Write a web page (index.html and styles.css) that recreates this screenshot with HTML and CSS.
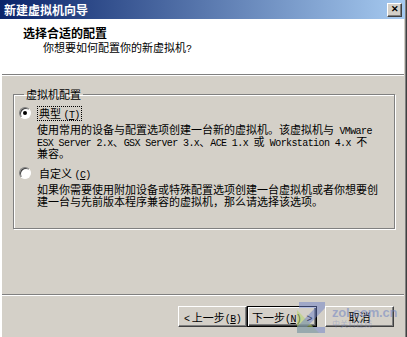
FILE: index.html
```html
<!DOCTYPE html>
<html lang="zh-CN">

<head>
    <meta charset="UTF-8">
    <title>新建虚拟机向导</title>
    <link rel="stylesheet" href="styles.css">
</head>

<body>
    <div class="window">
        <!-- 标题栏 -->
        <div class="titlebar">
            <span class="title">新建虚拟机向导</span>
            <button type="button" class="close-btn">✕</button>
        </div>

        <!-- 向导页头 -->
        <div class="header">
            <h1>选择合适的配置</h1>
            <p>你想要如何配置你的新虚拟机<span class="en">?</span></p>
        </div>
        <div class="etched"></div>

        <div class="content">
            <fieldset class="group">
                <legend>虚拟机配置</legend>

                <div class="option">
                    <span class="radio checked"></span>
                    <span class="option-label focus">典型 <span class="en">(<u>T</u>)</span></span>
                    <p class="option-desc">使用常用的设备与配置选项创建一台新的虚拟机。该虚拟机与<span class="en"> VMware</span><br><span class="en">ESX Server 2.x</span>、<span class="en">GSX Server 3.x</span>、<span class="en">ACE 1.x </span>或<span class="en"> Workstation 4.x </span>不<br>兼容。</p>
                </div>

                <div class="option">
                    <span class="radio"></span>
                    <span class="option-label">自定义 <span class="en">(<u>C</u>)</span></span>
                    <p class="option-desc">如果你需要使用附加设备或特殊配置选项创建一台虚拟机或者你想要创<br>建一台与先前版本程序兼容的虚拟机，那么请选择该选项。</p>
                </div>
            </fieldset>
        </div>

        <div class="etched"></div>
        <div class="footer">
            <button type="button" class="win-btn"><span class="en">&lt;</span> 上一步<span class="en">(<u>B</u>)</span></button>
            <button type="button" class="win-btn default">下一步<span class="en">(<u>N</u>) &gt;</span></button>
            <button type="button" class="win-btn cancel">取消</button>
        </div>

        <!-- 水印 -->
        <div class="watermark">
            <svg width="28" height="31" viewBox="0 0 28 31">
                <polygon points="0,31 0,8 22,31" fill="#b7d36a" opacity="0.55"/>
                <polygon points="2,0 28,0 28,6 10,25 28,25 28,31 0,31 0,25 18,6 2,6" fill="#6c7fc8" opacity="0.5"/>
            </svg>
            <div class="wm-text">
                <span class="wm-site">zol.com.cn</span>
                <span class="wm-sub">中关村在线</span>
            </div>
        </div>
    </div>
</body>

</html>
```

FILE: styles.css
```css
* {
    box-sizing: border-box;
    margin: 0px;
    padding: 0px;
}

body {
    background-color: #d4d0c8;
    font-family: "Noto Sans CJK SC", "Liberation Sans", sans-serif;
    font-size: 11px;
    color: #000;
}

/* 窗口 */
.window {
    position: relative;
    width: 407px;
    height: 337px;
    display: flex;
    flex-direction: column;
    background-color: #d4d0c8;
    border-left: 2px solid #fff;
    border-right: 1px solid #404040;
    box-shadow: inset -1px 0 #808080, inset -2px 0 #d4d0c8;
    padding-right: 2px;
}

/* 西文字符用等宽字体，行高小一点免得撑开行盒 */
.en {
    font-family: "Liberation Mono", monospace;
    font-size: 10px;
    letter-spacing: -0.6px;
    line-height: 7px;
}

/* 标题栏 */
.titlebar {
    height: 19px;
    margin-left: -2px;
    margin-right: -1px;
    display: flex;
    align-items: center;
    justify-content: space-between;
    padding: 0 3px 0 4px;
    background: linear-gradient(to right, #0a246a, #a6caf0);
}

.title {
    color: #fff;
    font-weight: bold;
    font-size: 12px;
    line-height: 14px;
}

.close-btn {
    width: 15px;
    height: 14px;
    background-color: #d4d0c8;
    border: 1px solid;
    border-color: #fff #404040 #404040 #fff;
    box-shadow: inset -1px -1px #808080;
    font-size: 9px;
    font-weight: bold;
    line-height: 11px;
    color: #000;
}

/* 页头 */
.header {
    height: 55px;
    background-color: #fff;
    padding: 7px 0 0 21px;
}

.header h1 {
    font-size: 12px;
    font-weight: bold;
    line-height: 14px;
}

.header p {
    margin-top: 1px;
    padding-left: 20px;
    line-height: 13px;
}

.etched {
    height: 2px;
    border-top: 1px solid #808080;
    border-bottom: 1px solid #fff;
}

/* 内容 */
.content {
    flex: 1;
    padding: 12px 9px 0 11px;
}

.group {
    border: 1px solid #808080;
    box-shadow: inset 1px 1px #fff, 1px 1px #fff;
    padding: 5px 10px 21px 5px;
}

.group legend {
    margin-left: 5px;
    padding: 0 2px;
    line-height: 13px;
}

.option {
    display: grid;
    grid-template-columns: 12px auto;
    column-gap: 6px;
}

.option + .option {
    margin-top: 7px;
}

.radio {
    width: 12px;
    height: 12px;
    margin-top: 1px;
    border-radius: 50%;
    background-color: #fff;
    border: 1px solid;
    border-color: #808080 #fff #fff #808080;
    box-shadow: inset 1px 1px #404040, 0 0 0 0.5px #d4d0c8;
    display: flex;
    align-items: center;
    justify-content: center;
}

.radio.checked::after {
    content: "";
    width: 4px;
    height: 4px;
    border-radius: 50%;
    background-color: #000;
}

.option-label {
    justify-self: start;
    line-height: 13px;
    padding: 0 1px;
    border: 1px dotted transparent;
}

.option-label.focus {
    border-color: #000;
}

.option-desc {
    grid-column: 2;
    margin-top: 2px;
    line-height: 12px;
    white-space: nowrap;
}

/* 按钮 */
.footer {
    height: 41px;
    display: flex;
    align-items: flex-start;
    padding: 10px 0 0 176px;
}

.win-btn {
    width: 69px;
    height: 21px;
    background-color: #d4d0c8;
    border: 1px solid;
    border-color: #fff #404040 #404040 #fff;
    box-shadow: inset -1px -1px #808080;
    font-family: inherit;
    font-size: 11px;
    color: #000;
}

.win-btn.default {
    width: 70px;
    border: 1px solid #000;
    box-shadow: inset 1px 1px #fff, inset -1px -1px #404040, inset -2px -2px #808080;
}

.win-btn.cancel {
    margin-left: 8px;
}

/* 水印 */
.watermark {
    position: absolute;
    left: 295px;
    top: 302px;
    display: flex;
    gap: 7px;
    pointer-events: none;
}

.wm-text {
    display: flex;
    flex-direction: column;
    padding-top: 4px;
}

.wm-site {
    font-family: "Liberation Sans", sans-serif;
    font-weight: bold;
    font-size: 13px;
    line-height: 13px;
    letter-spacing: -0.2px;
    color: rgba(110, 130, 195, 0.55);
}

.wm-sub {
    font-size: 8px;
    line-height: 10px;
    color: rgba(120, 135, 190, 0.45);
}
```
